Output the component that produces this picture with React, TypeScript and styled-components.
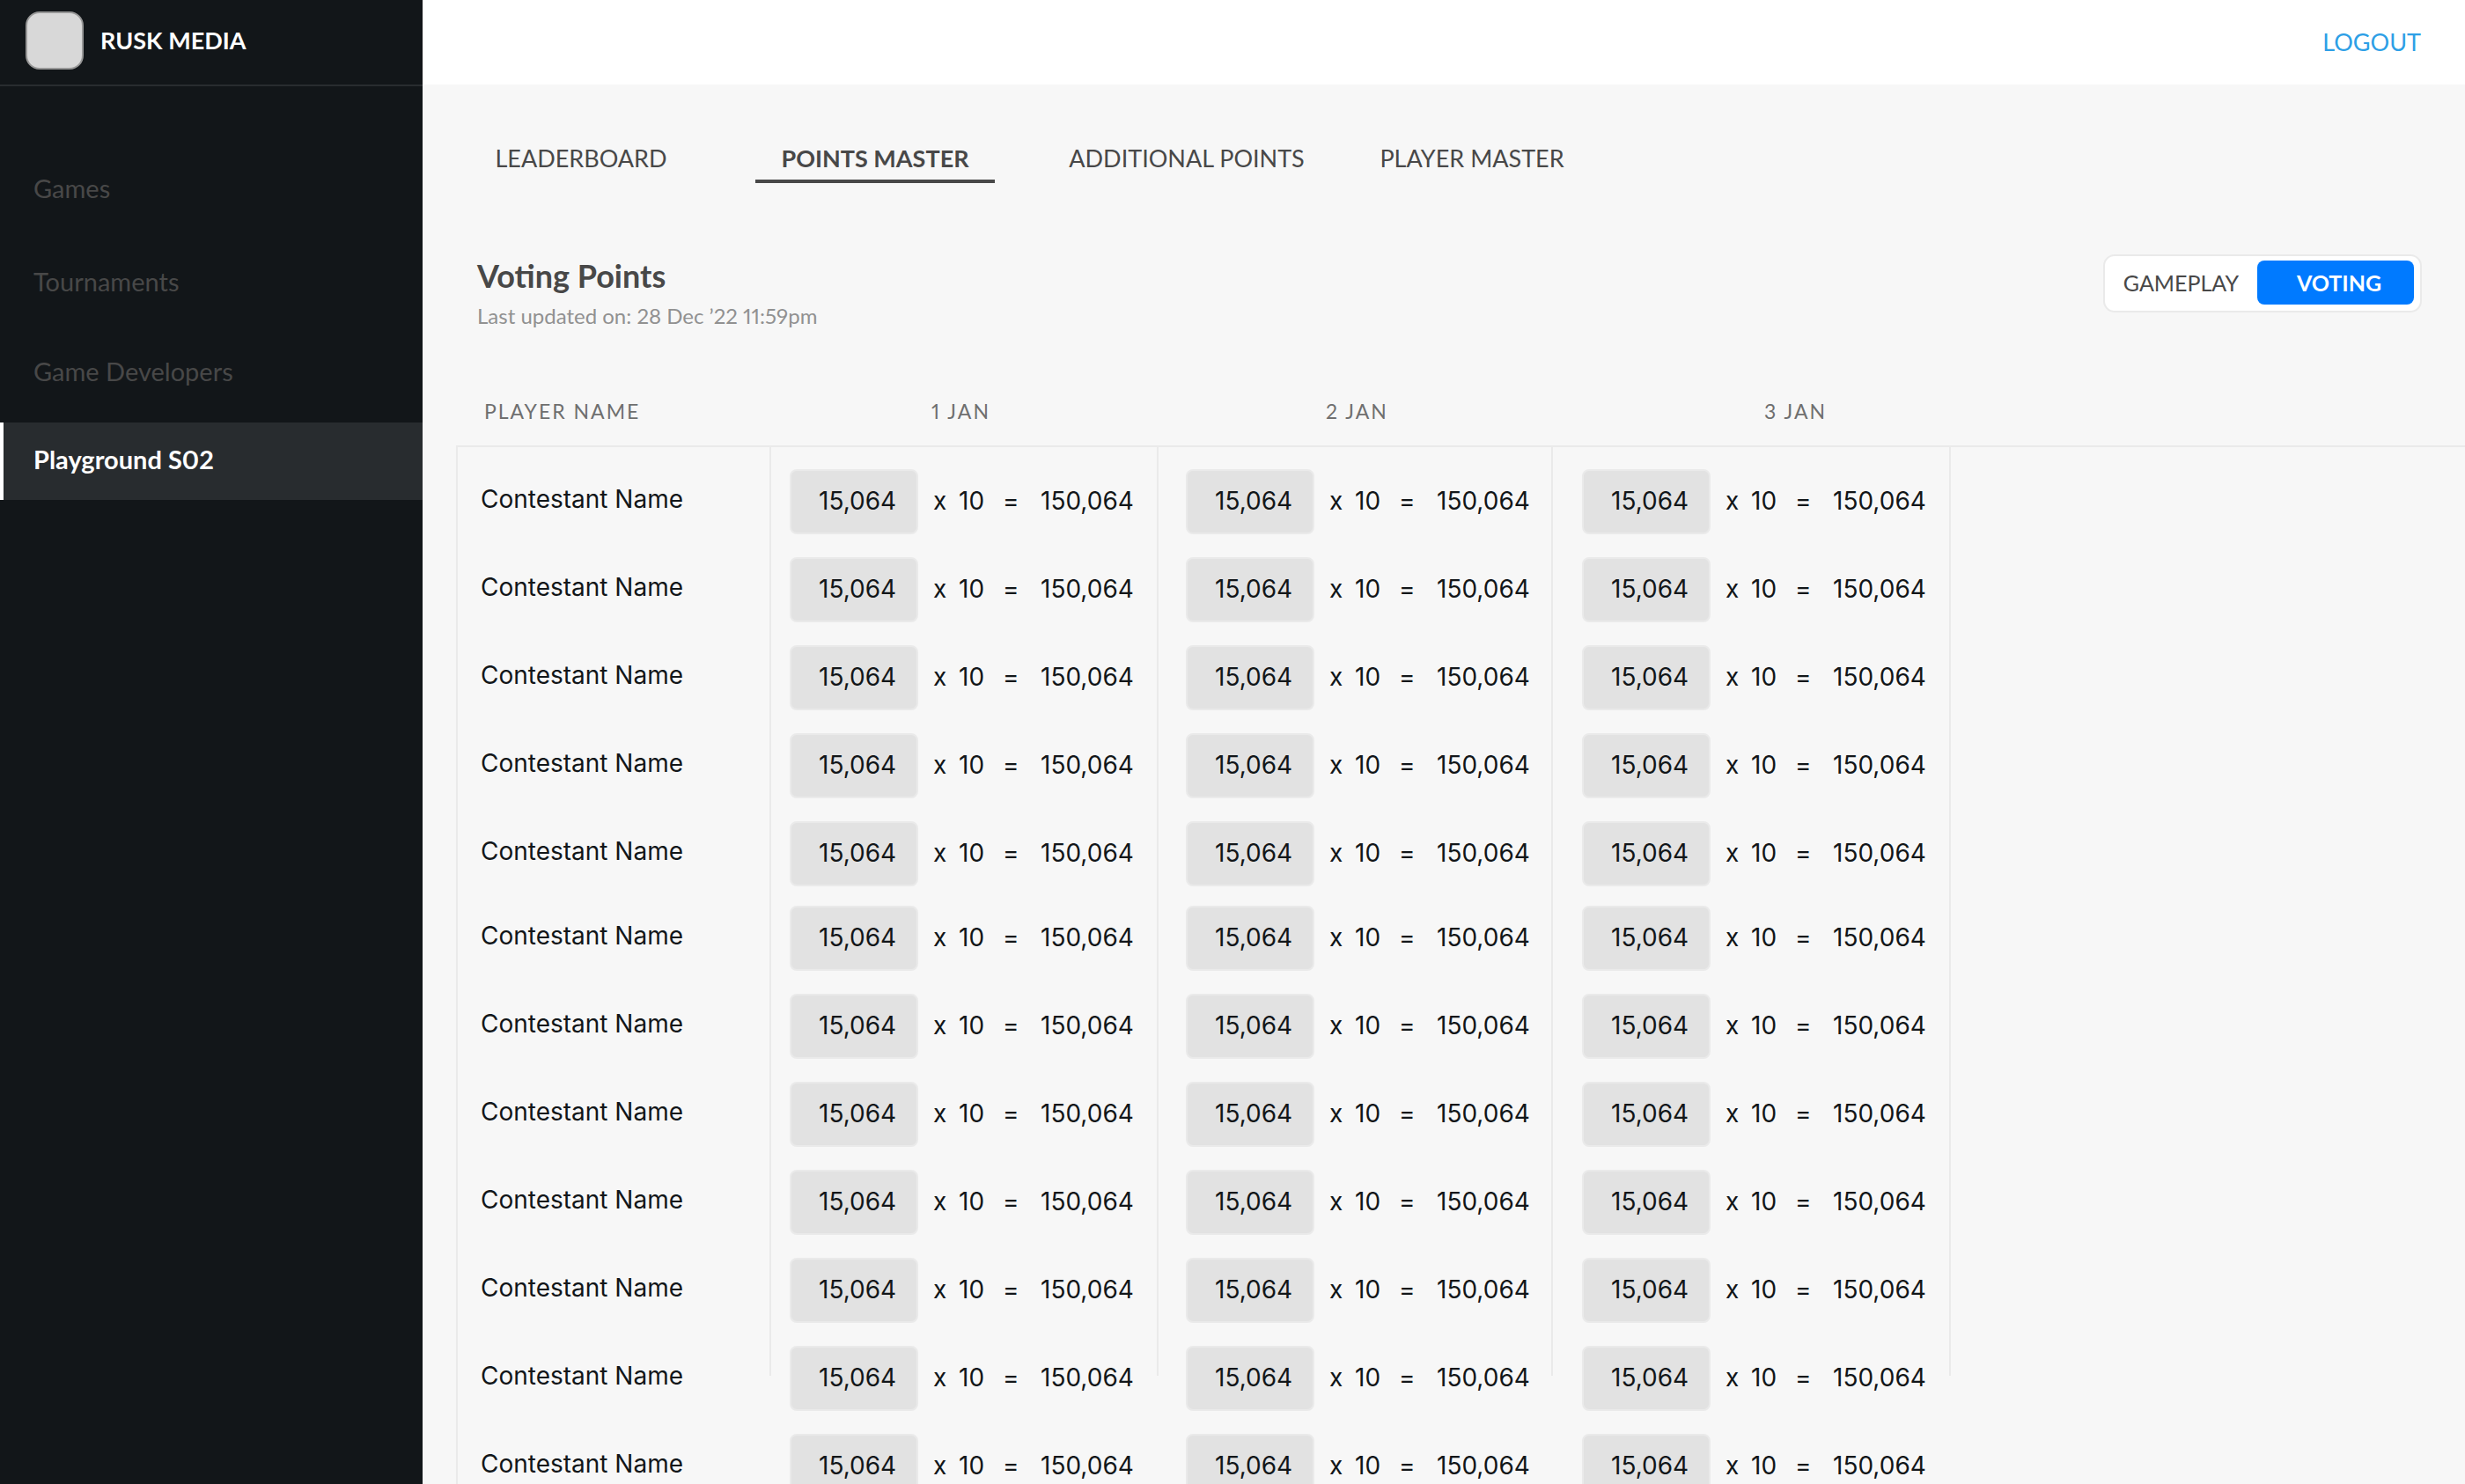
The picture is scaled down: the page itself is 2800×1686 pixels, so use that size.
import React from "react";
import styled, { createGlobalStyle } from "styled-components";

const display = `Lato, "Open Sans", sans-serif`;
const body = `Inter, Roboto, sans-serif`;

const GlobalStyle = createGlobalStyle`
  *, *::before, *::after { box-sizing: border-box; }
  body {
    margin: 0;
    background: #f7f7f7;
    font-family: ${display};
    font-variant-numeric: proportional-nums;
  }
  button, input { font: inherit; }
`;

const Shell = styled.div`
  display: flex;
  height: 100vh;
  overflow: hidden;
`;

const Sidebar = styled.aside`
  flex: 0 0 480px;
  background: #121619;
  color: #fff;
`;

const Brand = styled.div`
  display: flex;
  align-items: center;
  gap: 19px;
  height: 98px;
  padding: 0 29px 4px;
  border-bottom: 2px solid #282c2f;
  font-size: 27px;
  font-weight: 700;
  line-height: 34px;
`;

const BrandMark = styled.span`
  width: 66px;
  height: 66px;
  border: 2px solid #979797;
  border-radius: 16px;
  background: #d8d8d8;
`;

const SideNav = styled.nav`
  display: flex;
  flex-direction: column;
  padding-top: 74px;
`;

const SideLink = styled.a<{ $active?: boolean; $after: number }>`
  display: flex;
  align-items: center;
  height: 88px;
  margin-bottom: ${(p) => p.$after}px;
  padding: 0 34px 4px;
  border-left: 4px solid ${(p) => (p.$active ? "#fff" : "transparent")};
  background: ${(p) => (p.$active ? "#282c2f" : "transparent")};
  color: ${(p) => (p.$active ? "#fff" : "#484848")};
  font-size: 29px;
  font-weight: ${(p) => (p.$active ? 700 : 400)};
  line-height: 34px;
  text-decoration: none;
`;

const Main = styled.main`
  flex: 1;
  min-width: 0;
  overflow: auto;
  scrollbar-width: none;
`;

const TopBar = styled.header`
  display: flex;
  align-items: center;
  justify-content: flex-end;
  height: 96px;
  padding: 0 50px;
  background: #fff;
`;

const Logout = styled.button`
  padding: 0;
  border: 0;
  background: none;
  color: #2d9fe6;
  font-size: 27px;
  line-height: 34px;
`;

const Tabs = styled.nav`
  display: flex;
  gap: 76px;
  padding: 66px 38px 0 58px;
`;

const Tab = styled.button<{ $active?: boolean; $width: number }>`
  width: ${(p) => p.$width}px;
  height: 46px;
  padding: 0 0 6px;
  border: 0;
  border-bottom: 4px solid ${(p) => (p.$active ? "#484848" : "transparent")};
  background: none;
  color: #484848;
  font-size: 27px;
  font-weight: ${(p) => (p.$active ? 700 : 400)};
  line-height: 34px;
  white-space: nowrap;
`;

const SectionHead = styled.section`
  display: flex;
  align-items: flex-start;
  justify-content: space-between;
  padding: 81px 49px 0 62px;
`;

const Title = styled.h1`
  margin: 0;
  color: #484848;
  font-size: 36px;
  font-weight: 700;
  line-height: 48px;
`;

const Updated = styled.p`
  margin: 7px 0 0;
  color: #919191;
  font-size: 24px;
  line-height: 30px;
`;

const Toggle = styled.div`
  display: flex;
  align-items: center;
  width: 362px;
  height: 66px;
  padding: 0 7px 2px 0;
  border: 2px solid #eaeaea;
  border-radius: 13px;
  background: #fff;
`;

const ToggleOption = styled.button<{ $active?: boolean }>`
  flex: ${(p) => (p.$active ? "0 0 178px" : "1")};
  height: 50px;
  padding: 0 0 0 ${(p) => (p.$active ? 8 : 0)}px;
  border: 0;
  border-radius: 8px;
  background: ${(p) => (p.$active ? "#007aff" : "none")};
  color: ${(p) => (p.$active ? "#fff" : "#484848")};
  font-size: 25px;
  font-weight: ${(p) => (p.$active ? 700 : 400)};
  line-height: 32px;
`;

const rule = "linear-gradient(#eaeaea, #eaeaea)";

const Board = styled.div`
  margin: 55px 0 0 38px;
  background-image: ${rule}, ${rule}, ${rule}, ${rule}, ${rule};
  background-position: 0 78px, 356px 78px, 796px 78px, 1244px 78px, 1696px 78px;
  background-size: 2px 100%, 2px 1056px, 2px 1056px, 2px 1056px, 2px 1056px;
  background-repeat: no-repeat;
`;

const Table = styled.table`
  width: 100%;
  border-collapse: collapse;
  table-layout: fixed;
`;

const HeadCell = styled.th<{ $inset: number }>`
  height: 78px;
  padding: 0 0 2px ${(p) => p.$inset}px;
  border-bottom: 2px solid #eaeaea;
  color: #6f6f6f;
  font-size: 23px;
  font-weight: 400;
  letter-spacing: 2px;
  line-height: 30px;
  text-align: left;
  vertical-align: middle;
`;

const Row = styled.tr<{ $compact?: boolean }>`
  & > * {
    padding: 0 0 ${(p) => (p.$compact ? 22 : 26)}px;
    text-align: left;
    font-weight: 400;
  }
  &:first-child > * { padding-top: 25px; }
`;

const bodyText = `
  color: #121619;
  font-family: ${body};
  font-size: 28px;
  line-height: 34px;
`;

const PlayerName = styled.div`
  ${bodyText}
  display: flex;
  align-items: center;
  height: 74px;
  padding: 0 0 6px 28px;
`;

const Formula = styled.div`
  ${bodyText}
  display: grid;
  grid-template-columns: 163px 29px 50px 43px auto;
  align-items: center;
  height: 74px;
  margin-left: 32px;

  & > span { padding-bottom: 2px; }
`;

const VotesInput = styled.input`
  ${bodyText}
  width: 146px;
  height: 74px;
  padding: 0 0 3px 31px;
  border: 2px solid #eaeaea;
  border-radius: 8px;
  background: #e2e2e2;
`;

const navItems = [
  { label: "Games", after: 18 },
  { label: "Tournaments", after: 14 },
  { label: "Game Developers", after: 12 },
  { label: "Playground S02", after: 0, active: true },
];

const tabs = [
  { label: "LEADERBOARD", width: 244 },
  { label: "POINTS MASTER", width: 272, active: true },
  { label: "ADDITIONAL POINTS", width: 284 },
  { label: "PLAYER MASTER", width: 212 },
];

const days = [
  { label: "1 JAN", inset: 193 },
  { label: "2 JAN", inset: 191 },
  { label: "3 JAN", inset: 239 },
];

const players = Array.from({ length: 12 }, (_, i) => ({
  id: i + 1,
  name: "Contestant Name",
  votes: "15,064",
  total: "150,064",
}));

export default function App() {
  return (
    <>
      <GlobalStyle />
      <Shell>
        <Sidebar>
          <Brand>
            <BrandMark />
            RUSK MEDIA
          </Brand>
          <SideNav>
            {navItems.map((n) => (
              <SideLink key={n.label} href="#" $active={n.active} $after={n.after}>
                {n.label}
              </SideLink>
            ))}
          </SideNav>
        </Sidebar>
        <Main>
          <TopBar>
            <Logout type="button">LOGOUT</Logout>
          </TopBar>
          <Tabs>
            {tabs.map((t) => (
              <Tab key={t.label} type="button" $active={t.active} $width={t.width}>
                {t.label}
              </Tab>
            ))}
          </Tabs>
          <SectionHead>
            <div>
              <Title>Voting Points</Title>
              <Updated>Last updated on: 28 Dec ’22 11:59pm</Updated>
            </div>
            <Toggle>
              <ToggleOption type="button">GAMEPLAY</ToggleOption>
              <ToggleOption type="button" $active>VOTING</ToggleOption>
            </Toggle>
          </SectionHead>
          <Board>
            <Table>
              <colgroup>
                <col style={{ width: 347 }} />
                {days.map((d) => (
                  <col key={d.label} style={{ width: 450 }} />
                ))}
                <col />
              </colgroup>
              <thead>
                <tr>
                  <HeadCell scope="col" $inset={32}>PLAYER NAME</HeadCell>
                  {days.map((d) => (
                    <HeadCell key={d.label} scope="col" $inset={d.inset}>{d.label}</HeadCell>
                  ))}
                  <HeadCell as="td" $inset={0} />
                </tr>
              </thead>
              <tbody>
                {players.map((p) => (
                  <Row key={p.id} $compact={p.id === 5}>
                    <th scope="row">
                      <PlayerName>{p.name}</PlayerName>
                    </th>
                    {days.map((d) => (
                      <td key={d.label}>
                        <Formula>
                          <VotesInput
                            aria-label={`${p.name} ${p.id} votes, ${d.label}`}
                            defaultValue={p.votes}
                          />
                          <span>x</span>
                          <span>10</span>
                          <span>=</span>
                          <span>{p.total}</span>
                        </Formula>
                      </td>
                    ))}
                    <td />
                  </Row>
                ))}
              </tbody>
            </Table>
          </Board>
        </Main>
      </Shell>
    </>
  );
}
